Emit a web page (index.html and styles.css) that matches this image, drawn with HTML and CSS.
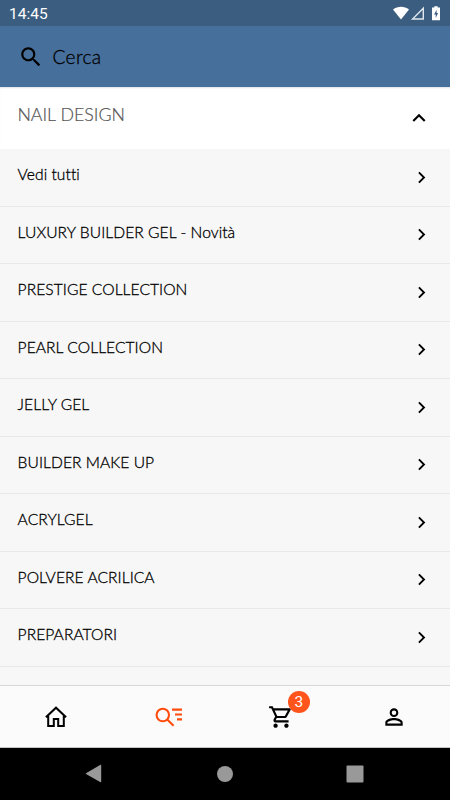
FILE: index.html
```html
<!DOCTYPE html>
<html lang="it">
<head>
  <meta charset="UTF-8">
  <title>Cerca</title>
  <link rel="stylesheet" href="styles.css">
</head>
<body>

  <!-- shared chevron for the list rows -->
  <svg class="sprite">
    <symbol id="chevron" viewBox="0 0 24 24">
      <path d="M8.59 16.59L13.17 12 8.59 7.41 10 6l6 6-6 6z"/>
    </symbol>
  </svg>

  <div class="status-bar">
    <span class="clock">14:45</span>
    <svg class="status-icons" viewBox="0 0 50 16" width="50" height="16">
      <path fill="#fff" d="M0 3.6C4.6-.2 11.4-.2 16 3.6L8 13.6z"/>
      <path fill="none" stroke="#dfe6ec" stroke-width="1.4" d="M30.3 2.2v10.8H19.6z"/>
      <path fill="#fff" d="M41.3.2h3.4v1.4h2.3v12.6h-8V1.6h2.3z"/>
      <path fill="#3b5d80" d="M43.6 3.8l-2.5 4.7h1.6v3.4l2.4-4.8h-1.5z"/>
    </svg>
  </div>

  <div class="search-bar">
    <svg class="search-icon" viewBox="0 0 24 24">
      <path d="M15.5 14h-.79l-.28-.27C15.41 12.59 16 11.11 16 9.5 16 5.91 13.09 3 9.5 3S3 5.91 3 9.5 5.91 16 9.5 16c1.61 0 3.09-.59 4.23-1.57l.27.28v.79l5 4.99L20.49 19l-4.99-5zm-6 0C7.01 14 5 11.99 5 9.5S7.01 5 9.5 5 14 7.01 14 9.5 11.99 14 9.5 14z"/>
    </svg>
    <span>Cerca</span>
  </div>

  <div class="category">
    <span>NAIL DESIGN</span>
    <svg class="arrow-up" viewBox="0 0 24 24"><path d="M12 8l-6 6 1.41 1.41L12 10.83l4.59 4.58L18 14z"/></svg>
  </div>

  <div class="list">
    <div class="row"><span>Vedi tutti</span><svg class="chevron"><use href="#chevron"/></svg></div>
    <div class="row"><span>LUXURY BUILDER GEL - Novità</span><svg class="chevron"><use href="#chevron"/></svg></div>
    <div class="row"><span>PRESTIGE COLLECTION</span><svg class="chevron"><use href="#chevron"/></svg></div>
    <div class="row"><span>PEARL COLLECTION</span><svg class="chevron"><use href="#chevron"/></svg></div>
    <div class="row"><span>JELLY GEL</span><svg class="chevron"><use href="#chevron"/></svg></div>
    <div class="row"><span>BUILDER MAKE UP</span><svg class="chevron"><use href="#chevron"/></svg></div>
    <div class="row"><span>ACRYLGEL</span><svg class="chevron"><use href="#chevron"/></svg></div>
    <div class="row"><span>POLVERE ACRILICA</span><svg class="chevron"><use href="#chevron"/></svg></div>
    <div class="row"><span>PREPARATORI</span><svg class="chevron"><use href="#chevron"/></svg></div>
  </div>

  <div class="tabs">
    <div class="tab">
      <svg viewBox="0 0 22 22" width="22" height="22">
        <path fill="none" stroke="#000" stroke-width="2" d="M.9 11.2L11 1.7l10.1 9.5M3.2 9.5v10.6h5.6v-7h4.4v7h5.6V9.5"/>
      </svg>
    </div>
    <div class="tab">
      <svg viewBox="0 0 28 20" width="28" height="20">
        <g fill="none" stroke="#ff4d0d" stroke-width="2.1">
          <circle cx="7.8" cy="8" r="6.2"/>
          <path d="M12.2 12.4l6.4 6.4M17 2.6h10M20 7.5h7M22 12.4h5"/>
        </g>
      </svg>
    </div>
    <div class="tab">
      <div class="cart">
        <svg viewBox="0 0 24 24" width="26" height="26">
          <path d="M15.55 13c.75 0 1.41-.41 1.75-1.03l3.58-6.49A.996.996 0 0 0 20.01 4H5.21l-.94-2H1v2h2l3.6 7.59-1.35 2.44C4.52 15.37 5.48 17 7 17h12v-2H7l1.1-2h7.45zM6.16 6h12.15l-2.76 5H8.53L6.16 6zM7 18c-1.1 0-1.99.9-1.99 2S5.9 22 7 22s2-.9 2-2-.9-2-2-2zm10 0c-1.1 0-1.99.9-1.99 2s.89 2 1.99 2 2-.9 2-2-.9-2-2-2z"/>
        </svg>
        <span class="badge">3</span>
      </div>
    </div>
    <div class="tab">
      <svg viewBox="0 0 24 24" width="26" height="26">
        <path d="M12 5.9a2.1 2.1 0 1 1 0 4.2 2.1 2.1 0 0 1 0-4.2m0 9c2.97 0 6.1 1.46 6.1 2.1v1.1H5.9V17c0-.64 3.13-2.1 6.1-2.1M12 4C9.79 4 8 5.79 8 8s1.79 4 4 4 4-1.79 4-4-1.79-4-4-4zm0 9c-2.67 0-8 1.34-8 4v3h16v-3c0-2.66-5.33-4-8-4z"/>
      </svg>
    </div>
  </div>

  <div class="android-nav">
    <svg viewBox="0 0 18 20" width="18" height="20"><path d="M1 9.2L15.5.8q.7-.3.7.4v16.6q0 .7-.7.4L1 9.9q-.6-.4 0-.7z"/></svg>
    <svg viewBox="0 0 18 18" width="18" height="18"><circle cx="9" cy="9" r="8"/></svg>
    <svg viewBox="0 0 18 18" width="18" height="18"><rect x=".5" y=".5" width="17" height="17" rx="1"/></svg>
  </div>

</body>
</html>
```

FILE: styles.css
```css
* {
  box-sizing: border-box;
}
body {
  margin: 0;
  height: 800px;
  display: flex;
  flex-direction: column;
  overflow: hidden;
  background-color: #f7f7f7;
  color: #000;
  font-family: Lato, sans-serif;
  font-weight: 300;
  font-variant-ligatures: none;
}
svg {
  display: block;
  flex: none;
}
.sprite {
  display: none;
}
/* Top bars */
.status-bar {
  flex: none;
  height: 26px;
  padding: 0 8px 0 9px;
  display: flex;
  align-items: center;
  justify-content: space-between;
  background-color: #3b5d80;
}
.clock {
  padding-top: 2px;
  color: #fff;
  font-family: Roboto, sans-serif;
  font-size: 15.5px;
  font-weight: 400;
}
.status-icons {
  margin-right: -0.5px;
  margin-top: 1px;
}
.search-bar {
  flex: none;
  height: 61px;
  padding-left: 18px;
  display: flex;
  align-items: center;
  gap: 8.5px;
  background-color: #476f9b;
  font-size: 19.2px;
  letter-spacing: 0.3px;
  -webkit-text-stroke: 0.3px #000;
}
.search-icon {
  width: 26px;
  height: 26px;
}
/* Open category */
.category {
  flex: none;
  height: 62px;
  padding: 0 18px 8px 17.4px;
  display: flex;
  align-items: center;
  justify-content: space-between;
  background-color: #fff;
  box-shadow: inset 0 2px 2px -1px #dde2e8;
  color: #555;
  font-size: 17.8px;
  -webkit-text-stroke: 0.2px #555;
}
.arrow-up {
  width: 26px;
  height: 26px;
  margin-top: 7px;
  fill: #000;
}
.list {
  flex: 1;
  min-height: 0;
  overflow: hidden;
}
.row {
  height: 57.5px;
  padding: 0 17px 6px 17.6px;
  display: flex;
  align-items: center;
  justify-content: space-between;
  border-bottom: 1px solid #e8e8e8;
  font-size: 15.6px;
  letter-spacing: 0.06px;
  -webkit-text-stroke: 0.3px #000;
}
.chevron {
  width: 23px;
  height: 23px;
  margin-top: 6px;
}
/* Bottom tabs */
.tabs {
  flex: none;
  height: 63px;
  display: grid;
  grid-template-columns: repeat(4, 1fr);
  background-color: #fbfbfb;
  border-top: 1px solid #d8d8d8;
  border-bottom: 1px solid #c4c4c4;
}
.tab {
  display: flex;
  align-items: center;
  justify-content: center;
}
.cart {
  position: relative;
}
.badge {
  position: absolute;
  top: -13px;
  left: 19.5px;
  width: 22px;
  height: 22px;
  border-radius: 50%;
  background-color: #ff541c;
  color: #fff;
  font-family: Roboto, sans-serif;
  font-size: 15.5px;
  font-weight: 400;
  line-height: 22px;
  text-align: center;
}
.android-nav {
  flex: none;
  height: 52px;
  padding: 0 86px 0 85px;
  display: flex;
  align-items: center;
  justify-content: space-between;
  background-color: #000;
  fill: #999;
}
```
